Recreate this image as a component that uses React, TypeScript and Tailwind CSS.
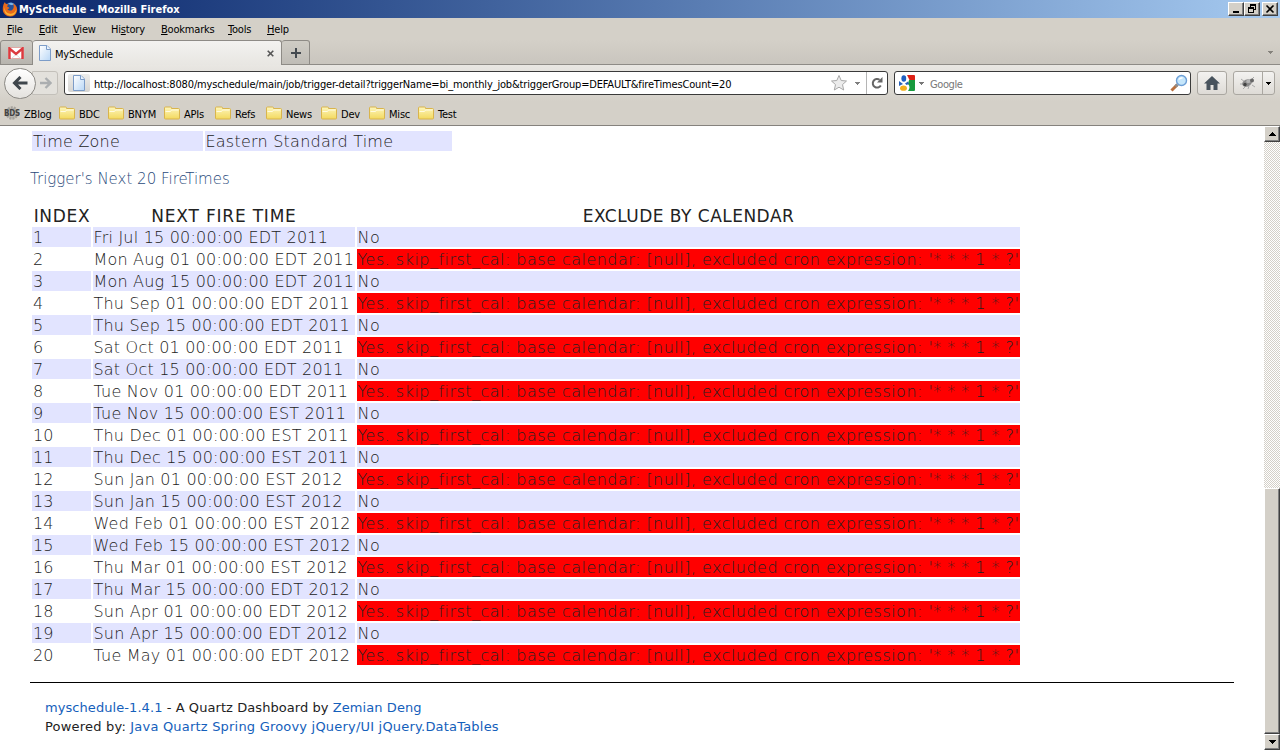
import type { ReactNode } from 'react';

const fireTimes = [
  'Fri Jul 15 00:00:00 EDT 2011',
  'Mon Aug 01 00:00:00 EDT 2011',
  'Mon Aug 15 00:00:00 EDT 2011',
  'Thu Sep 01 00:00:00 EDT 2011',
  'Thu Sep 15 00:00:00 EDT 2011',
  'Sat Oct 01 00:00:00 EDT 2011',
  'Sat Oct 15 00:00:00 EDT 2011',
  'Tue Nov 01 00:00:00 EDT 2011',
  'Tue Nov 15 00:00:00 EST 2011',
  'Thu Dec 01 00:00:00 EST 2011',
  'Thu Dec 15 00:00:00 EST 2011',
  'Sun Jan 01 00:00:00 EST 2012',
  'Sun Jan 15 00:00:00 EST 2012',
  'Wed Feb 01 00:00:00 EST 2012',
  'Wed Feb 15 00:00:00 EST 2012',
  'Thu Mar 01 00:00:00 EST 2012',
  'Thu Mar 15 00:00:00 EDT 2012',
  'Sun Apr 01 00:00:00 EDT 2012',
  'Sun Apr 15 00:00:00 EDT 2012',
  'Tue May 01 00:00:00 EDT 2012',
];

const menus = [
  { key: 'F', before: '', after: 'ile', width: 'w-[32px]' },
  { key: 'E', before: '', after: 'dit', width: 'w-[34px]' },
  { key: 'V', before: '', after: 'iew', width: 'w-[38px]' },
  { key: 's', before: 'Hi', after: 'tory', width: 'w-[50px]' },
  { key: 'B', before: '', after: 'ookmarks', width: 'w-[67px]' },
  { key: 'T', before: '', after: 'ools', width: 'w-[39px]' },
  { key: 'H', before: '', after: 'elp', width: 'w-[40px]' },
];

const bookmarks = [
  { name: 'BDC', width: 'w-[49px]' },
  { name: 'BNYM', width: 'w-[56px]' },
  { name: 'APIs', width: 'w-[51px]' },
  { name: 'Refs', width: 'w-[51px]' },
  { name: 'News', width: 'w-[55px]' },
  { name: 'Dev', width: 'w-[48px]' },
  { name: 'Misc', width: 'w-[49px]' },
  { name: 'Test', width: 'w-[50px]' },
];

function FirefoxIcon() {
  return (
    <svg width="16" height="16" viewBox="0 0 16 16">
      <circle cx="8.500" cy="7.500" r="6.300" fill="#23509a" />
      <path d="M6 2.500c2-1.200 5-.8 6.500 1-1.500 0-2 .8-3 .6S7 3.500 6 2.500z" fill="#79b4e8" />
      <path d="M1.500 3.500c.3-1 .8-1.800 1.500-2.500 0 1 .6 1.700 1.500 2l2 .4c-.6.8-1.500 1.400-1.500 2.200l2 1c.8.600 0 1.500-1.500 1.500.8 1.800 3.500 2 5 .6 1.800-1.700 1.500-4.500.3-6.400 3 1.500 5 4.500 4.200 7.900-.8 3.400-3.500 5.300-6.900 5.300-4 0-7-3-7.300-6.500-.1-2 .2-4 .7-5.500z" fill="#e8691a" />
      <path d="M2.500 6c.2 4.500 3 7 6.500 6.700 3-.2 4.700-2.200 5.200-4.700.4 4-2.400 6.700-5.700 6.700C4.500 14.700 1.500 11.500 2.500 6z" fill="#f9b233" />
    </svg>
  );
}

function PageIcon() {
  return (
    <svg width="16" height="16" viewBox="0 0 16 16">
      <defs>
        <linearGradient id="sheet" x1="0" y1="0" x2="1" y2="1">
          <stop offset="0" stopColor="#fff" />
          <stop offset="1" stopColor="#b9d7f6" />
        </linearGradient>
      </defs>
      <path d="M2.500.5h7.500l3.500 3.500v11.500h-11z" fill="url(#sheet)" stroke="#7c9cc8" />
      <path d="M9.500.5v4h4" fill="#e9f3fd" stroke="#7c9cc8" />
    </svg>
  );
}

function FolderIcon() {
  return (
    <svg width="16" height="16" viewBox="0 0 16 16" className="shrink-0">
      <defs>
        <linearGradient id="folder" x1="0" y1="0" x2="0" y2="1">
          <stop offset="0" stopColor="#fdf6bd" />
          <stop offset="1" stopColor="#f3d95e" />
        </linearGradient>
      </defs>
      <path d="M.5 3q0-1 1-1h5q1 0 1 1v.500h7q1 0 1 1v8.500q0 1-1 1h-13q-1 0-1-1z" fill="url(#folder)" stroke="#d9b44c" />
      <path d="M1.500 6.500h5l1-1.500h7" fill="none" stroke="#fffbe0" />
    </svg>
  );
}

function DownArrow({ color }: { color: string }) {
  return (
    <svg width="5" height="3" viewBox="0 0 5 3" shapeRendering="crispEdges" className="shrink-0">
      <path d="M0 0h5v1h-1v1h-1v1h-1v-1h-1v-1h-1z" fill={color} />
    </svg>
  );
}

function BevelButton({ children, className }: { children: ReactNode; className: string }) {
  return (
    <div
      className={`flex items-center justify-center border border-t-white border-l-white border-r-[#404040] border-b-[#404040] bg-[#d4d0c8] shadow-[inset_-1px_-1px_0_#808080] ${className}`}
    >
      {children}
    </div>
  );
}

function TitleBar() {
  return (
    <div className="flex h-[18px] items-center bg-linear-to-r from-[#0a246a] to-[#a6caf0] pl-[2px]">
      <FirefoxIcon />
      <span className="mt-px ml-px text-[11px] font-bold tracking-[0.02px] whitespace-nowrap text-white">MySchedule - Mozilla Firefox</span>
      <div className="mr-[2px] ml-auto flex">
        <BevelButton className="h-[14px] w-[16px]">
          <svg width="12" height="10" viewBox="0 0 12 10" shapeRendering="crispEdges">
            <path d="M3 7h6v2H3z" />
          </svg>
        </BevelButton>
        <BevelButton className="h-[14px] w-[16px]">
          <svg width="12" height="10" viewBox="0 0 12 10" shapeRendering="crispEdges">
            <path d="M4 0h6v6H8V5h1V2H5v1H4zM2 3h6v6H2zM3 5v3h4V5z" fillRule="evenodd" />
          </svg>
        </BevelButton>
        <BevelButton className="ml-[2px] h-[14px] w-[16px]">
          <svg width="12" height="10" viewBox="0 0 12 10">
            <path d="M2.500 1.500l7 7M9.500 1.500l-7 7" stroke="#000" strokeWidth="1.600" />
          </svg>
        </BevelButton>
      </div>
    </div>
  );
}

function MenuBar() {
  return (
    <div className="flex h-[22px] items-center pt-[2px] pl-[7px]">
      {menus.map((m) => (
        <div key={m.key} className={`${m.width} whitespace-nowrap`}>
          {m.before}
          <span className="underline underline-offset-1">{m.key}</span>
          {m.after}
        </div>
      ))}
    </div>
  );
}

function TabStrip() {
  return (
    <div className="flex h-[25px] bg-linear-to-b from-[#d4d0c8] to-[#c9c5be] shadow-[inset_0_-1px_0_#8e8b86]">
      <div className="flex h-[25px] w-[33px] items-center justify-center rounded-t-[3px] border border-[#8e8b86] bg-linear-to-b from-[#cfccc5] to-[#b7b4ae] pr-px">
        <svg width="16" height="12" viewBox="0 0 16 12">
          <path d="M.5.500h15v11H.5z" fill="#fff" stroke="#e0a9a5" />
          <path d="M3.500 11.500L8 7.500l4.500 4" fill="none" stroke="#ddd" />
          <path d="M1.500 12V1.500L8 7l6.500-5.500V12" fill="none" stroke="#dc3a3f" strokeWidth="2.400" />
        </svg>
      </div>
      <div className="flex h-[25px] w-[249px] items-center rounded-t-[3px] border-t border-r border-[#8e8b86] bg-linear-to-b from-[#f3f2f0] to-[#e8e6e2] pl-[4px]">
        <PageIcon />
        <span className="mt-[4px] ml-[2px]">MySchedule</span>
        <svg width="7" height="7" viewBox="0 0 7 7" className="mr-[7px] ml-auto">
          <path d="M.7.700l5.600 5.600M6.300.700L.7 6.300" stroke="#555" strokeWidth="1.600" />
        </svg>
      </div>
      <div className="flex h-[25px] w-[28px] items-center justify-center rounded-t-[3px] border border-l-0 border-[#8e8b86] bg-linear-to-b from-[#cfccc5] to-[#bfbcb6]">
        <svg width="10" height="10" viewBox="0 0 10 10" shapeRendering="crispEdges">
          <path d="M4 0h2v4h4v2H6v4H4V6H0V4h4z" fill="#43494f" />
        </svg>
      </div>
      <div className="mr-[7px] ml-auto flex items-center">
        <DownArrow color="#85827c" />
      </div>
    </div>
  );
}

function NavBar() {
  return (
    <div className="flex h-[36px] items-center bg-linear-to-b from-[#e9e7e3] to-[#d4d0c8] pl-[4px]">
      <div className="z-10 flex h-[31px] w-[32px] shrink-0 items-center justify-center rounded-full border border-[#8b8984] bg-linear-to-b from-white to-[#e4e2de]">
        <svg width="16" height="14" viewBox="0 0 16 14">
          <path d="M8.500 1L2.500 7l6 6M3 7h12.500" fill="none" stroke="#3f464c" strokeWidth="3" />
        </svg>
      </div>
      <div className="-ml-[4px] flex h-[24px] w-[26px] shrink-0 items-center justify-center rounded-r-[3px] border border-[#c3c0ba] bg-[#e3e1dc]">
        <svg width="13" height="12" viewBox="0 0 13 12">
          <path d="M6.500 1l5 5-5 5M11 6H1" fill="none" stroke="#abaeb0" strokeWidth="2.400" />
        </svg>
      </div>
      <div className="ml-[6px] flex h-[24px] w-[824px] shrink-0 items-center rounded-[3px] border border-[#3a3a3a] bg-white">
        <div className="ml-[3px] flex h-[18px] w-[22px] items-center justify-center rounded-[2px] bg-linear-to-b from-[#ededeb] to-[#d6d5d2]">
          <PageIcon />
        </div>
        <span className="mt-[3px] ml-[4px] tracking-[-0.160px] whitespace-nowrap text-black">
          http://localhost:8080/myschedule/main/job/trigger-detail?triggerName=bi_monthly_job&amp;triggerGroup=DEFAULT&amp;fireTimesCount=20
        </span>
        <div className="ml-auto flex h-full items-center">
          <svg width="18" height="18" viewBox="0 0 18 18">
            <path d="M9 1.500l2.200 5 5.300.5-4 3.600 1.200 5.400L9 13.200 4.300 16l1.200-5.400-4-3.600 5.300-.5z" fill="#ececec" stroke="#a8a8a8" />
          </svg>
          <div className="mr-[6px] ml-[7px]">
            <DownArrow color="#7f7f7f" />
          </div>
          <div className="mr-px flex h-full w-[20px] items-center justify-center border-l border-[#b5b5b5]">
            <svg width="12" height="12" viewBox="0 0 12 12">
              <path d="M9.800 8.500A4.300 4.300 0 1 1 8.600 2.800" fill="none" stroke="#666" strokeWidth="2" />
              <path d="M11.500 0v5.500H6z" fill="#666" />
            </svg>
          </div>
        </div>
      </div>
      <div className="ml-[6px] flex h-[24px] w-[297px] shrink-0 items-center rounded-[3px] border border-[#3a3a3a] bg-white pl-[4px]">
        <svg width="16" height="16" viewBox="0 0 16 16">
          <path d="M8 0h7q1 0 1 1v5h-5z" fill="#dd2016" />
          <path d="M10 5h6v10q0 1-1 1H9q3-4 0-7z" fill="#189a3e" />
          <path d="M0 6l4 3-4 2z" fill="#2a62b8" />
          <ellipse cx="4.800" cy="3.500" rx="2.400" ry="3.300" fill="#1f5fc0" />
          <ellipse cx="4.500" cy="13.200" rx="3.400" ry="2.600" fill="#f3b01c" />
          <path d="M6 8.500l3-2 1 2.500-2.500 1z" fill="#2a62b8" />
        </svg>
        <div className="ml-[4px]">
          <DownArrow color="#777" />
        </div>
        <span className="mt-[3px] ml-[6px] tracking-[-0.400px] text-[#777]">Google</span>
        <svg width="18" height="18" viewBox="0 0 18 18" className="mr-[2px] ml-auto">
          <path d="M7.500 10.500l-6 6" stroke="#b9703e" strokeWidth="3" />
          <path d="M7.500 10.500l-2 2" stroke="#8d8d8d" strokeWidth="3" />
          <circle cx="11.500" cy="6.500" r="5" fill="#c5e6fb" stroke="#6d9fd6" strokeWidth="1.400" />
          <path d="M8.500 6a3 3 0 0 1 5-2z" fill="#fff" />
        </svg>
      </div>
      <div className="ml-[6px] flex h-[24px] w-[30px] shrink-0 items-center justify-center rounded-[3px] border border-[#aaa7a1] bg-linear-to-b from-[#f3f2f0] to-[#dedbd6]">
        <svg width="16" height="14" viewBox="0 0 16 14">
          <path d="M8 0l8 7.500h-2.500V14H9.500V9h-3v5h-4V7.500H0z" fill="#48535d" />
        </svg>
      </div>
      <div className="ml-[6px] flex h-[24px] w-[42px] shrink-0 items-center rounded-[3px] border border-[#aaa7a1] bg-linear-to-b from-[#f3f2f0] to-[#dedbd6]">
        <div className="flex h-full w-[29px] items-center justify-center border-r border-[#aaa7a1]">
          <svg width="16" height="14" viewBox="0 0 16 14">
            <path d="M1 3l4 3M0 8h4M3 13l3-3M8 13l1-3M15 11l-3-2M14 1l-3 3" stroke="#aaa" />
            <ellipse cx="7" cy="7" rx="5" ry="3.600" fill="#8a8a8a" transform="rotate(-22 7 7)" />
            <ellipse cx="9" cy="5" rx="3" ry="1.800" fill="#b5b5b5" transform="rotate(-22 9 5)" />
            <circle cx="12" cy="4.500" r="2" fill="#666" />
            <circle cx="5" cy="8.500" r="1.700" fill="#444" />
          </svg>
        </div>
        <div className="mx-auto">
          <DownArrow color="#000" />
        </div>
      </div>
    </div>
  );
}

function BookmarksBar() {
  return (
    <div className="flex h-[25px] items-center border-b border-[#85827d] pl-[4px]">
      <svg width="16" height="16" viewBox="0 0 16 16">
        <circle cx="8" cy="8" r="5.500" fill="#bbb8b2" stroke="#a5a29c" strokeWidth="2.500" strokeDasharray="2 1" />
        <text x="0" y="11" fontSize="8" fontWeight="700" fill="#444" textLength="16" lengthAdjust="spacingAndGlyphs">BDS</text>
      </svg>
      <span className="mt-[4px] ml-[4px] w-[35px]">ZBlog</span>
      {bookmarks.map((b) => (
        <div key={b.name} className={`flex items-center ${b.width}`}>
          <FolderIcon />
          <span className="mt-[4px] ml-[4px]">{b.name}</span>
        </div>
      ))}
    </div>
  );
}

function FireTimesTable() {
  return (
    <div className="mt-[16px] ml-[2px] grid w-[988px] grid-cols-[59px_262px_663px] gap-x-[2px] gap-y-[2px] text-[16px] leading-[22px] font-extralight whitespace-nowrap">
      <div className="h-[20px] pl-px text-center text-[17px] font-normal tracking-[0.700px]">INDEX</div>
      <div className="h-[20px] text-center text-[17px] font-normal tracking-[0.800px]">NEXT FIRE TIME</div>
      <div className="h-[20px] text-center text-[17px] font-normal tracking-[0.480px]">EXCLUDE BY CALENDAR</div>
      {fireTimes.map((time, i) => {
        const odd = i % 2 === 0;
        const shade = odd ? 'bg-[#e2e4ff]' : '';
        return (
          <div key={time} className="contents">
            <div className={`h-[20px] pl-px ${shade}`}>{i + 1}</div>
            <div className={`h-[20px] pl-[0.500px] tracking-[0.200px] ${shade}`}>{time}</div>
            <div className={`h-[20px] pl-[0.500px] tracking-[0.470px] ${odd ? shade : 'bg-[#ff0000]'}`}>
              {odd ? 'No' : "Yes. skip_first_cal: base calendar: [null], excluded cron expression: '* * * 1 * ?'"}
            </div>
          </div>
        );
      })}
    </div>
  );
}

function Page() {
  return (
    <div className="min-w-0 flex-1 bg-white pt-[5px] pl-[30px] font-['DejaVu_Sans',sans-serif] text-[#222]">
      <div className="ml-[2px] flex gap-[2px] text-[16px] leading-[22px] font-extralight tracking-[0.230px]">
        <div className="h-[20px] w-[171px] bg-[#e2e4ff] pl-px">Time Zone</div>
        <div className="h-[20px] w-[247px] bg-[#e2e4ff] pl-[0.500px]">Eastern Standard Time</div>
      </div>
      <h3 className="mt-[18px] h-[20px] text-[15px] leading-[20px] font-extralight text-[#2a4a7b]">Trigger's Next 20 FireTimes</h3>
      <FireTimesTable />
      <div className="mt-[17px] h-px w-[1204px] bg-black" />
      <div className="mt-[15px] ml-[15px] text-[13px] leading-[19px] whitespace-nowrap">
        <div className="tracking-[0.070px]">
          <a className="text-[#1460bb]">myschedule-1.4.1</a> - A Quartz Dashboard by <a className="text-[#1460bb]">Zemian Deng</a>
        </div>
        <div className="tracking-[0.200px]">
          Powered by: <a className="text-[#1460bb]">Java Quartz Spring Groovy jQuery/UI jQuery.DataTables</a>
        </div>
      </div>
    </div>
  );
}

function Scrollbar() {
  return (
    <div className="flex w-[16px] shrink-0 flex-col bg-[repeating-conic-gradient(#ffffff_0_25%,#d4d0c8_0_50%)] bg-[length:2px_2px]">
      <BevelButton className="h-[16px] w-full">
        <svg width="7" height="4" viewBox="0 0 7 4" shapeRendering="crispEdges">
          <path d="M3 0h1v1h1v1h1v1h1v1H0V3h1V2h1V1h1z" />
        </svg>
      </BevelButton>
      <BevelButton className="mt-auto h-[246px] w-full">{null}</BevelButton>
      <BevelButton className="h-[16px] w-full">
        <svg width="7" height="4" viewBox="0 0 7 4" shapeRendering="crispEdges">
          <path d="M0 0h7v1H6v1H5v1H4v1H3V3H2V2H1V1H0z" />
        </svg>
      </BevelButton>
    </div>
  );
}

export default function App() {
  return (
    <div className="flex h-[750px] w-[1280px] flex-col overflow-hidden bg-[#d4d0c8] font-['DejaVu_Sans_Condensed','DejaVu_Sans',sans-serif] text-[11px] leading-[14px] tracking-[-0.200px] text-black">
      <TitleBar />
      <MenuBar />
      <TabStrip />
      <NavBar />
      <BookmarksBar />
      <div className="flex min-h-0 flex-1 tracking-normal">
        <Page />
        <Scrollbar />
      </div>
    </div>
  );
}
